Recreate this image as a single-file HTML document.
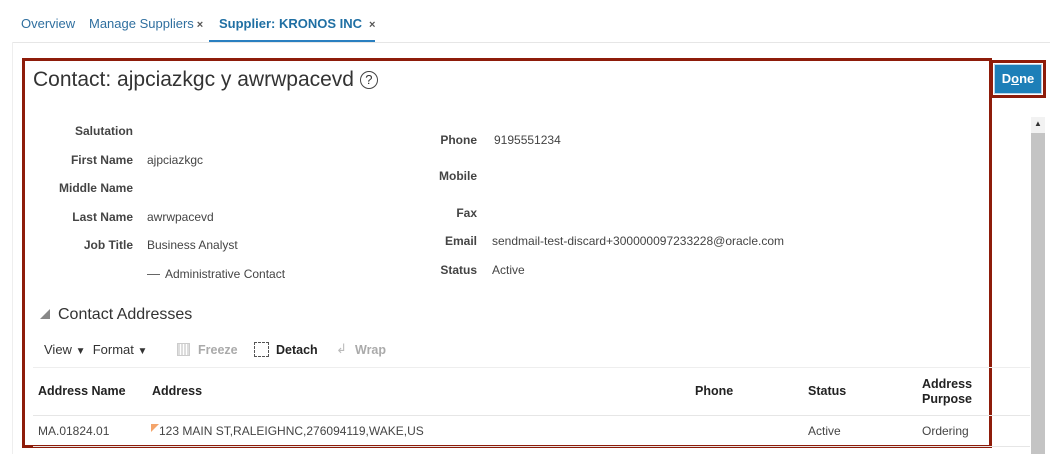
<!DOCTYPE html>
<html><head><meta charset="utf-8"><style>
*{margin:0;padding:0;box-sizing:border-box}
body{width:1050px;height:454px;background:#fff;font-family:"Liberation Sans",Arial,sans-serif;position:relative;overflow:hidden;color:#333}
.a{position:absolute;white-space:nowrap}
.tab{font-size:13px;color:#2f6f9f;top:16px}
.lbl{font-size:12px;font-weight:bold;color:#444;text-align:right;width:120px}
.val{font-size:12px;color:#444}
.th{font-size:12.5px;font-weight:bold;color:#222}
.td{font-size:12px;color:#444}
.x{color:#555;font-size:11px;font-weight:bold;margin-left:3px}
</style></head><body>
<div class="a tab" style="left:21px">Overview</div>
<div class="a tab" style="left:89px">Manage Suppliers<span class="x">×</span></div>
<div class="a tab" style="left:219px;font-weight:bold;color:#1f6fa3">Supplier: KRONOS INC<span class="x" style="margin-left:7px">×</span></div>
<div class="a" style="left:209px;top:40px;width:166px;height:3px;background:#2a7fc0"></div>
<div class="a" style="left:12px;top:42px;width:1038px;height:1px;background:#e6e6e6"></div>
<div class="a" style="left:12px;top:42px;width:1px;height:412px;background:#eee"></div>

<div class="a" style="left:22px;top:58px;width:970px;height:390px;border:3px solid #8e1c0a"></div>
<div class="a" style="left:33px;top:68px;font-size:21px;color:#333">Contact: ajpciazkgc y awrwpacevd <span style="display:inline-block;width:18px;height:18px;border:1.5px solid #444;border-radius:50%;font-size:13px;text-align:center;line-height:15px;vertical-align:2px">?</span></div>

<div class="a lbl" style="left:13px;top:124px">Salutation</div>
<div class="a lbl" style="left:13px;top:153px">First Name</div><div class="a val" style="left:147px;top:153px">ajpciazkgc</div>
<div class="a lbl" style="left:13px;top:181px">Middle Name</div>
<div class="a lbl" style="left:13px;top:210px">Last Name</div><div class="a val" style="left:147px;top:210px">awrwpacevd</div>
<div class="a lbl" style="left:13px;top:238px">Job Title</div><div class="a val" style="left:147px;top:238px">Business Analyst</div>
<div class="a val" style="left:147px;top:267px"><span style="display:inline-block;width:13px;height:1px;background:#666;vertical-align:3px;margin-right:5px"></span>Administrative Contact</div>

<div class="a lbl" style="left:357px;top:133px">Phone</div><div class="a val" style="left:494px;top:133px">9195551234</div>
<div class="a lbl" style="left:357px;top:169px">Mobile</div>
<div class="a lbl" style="left:357px;top:206px">Fax</div>
<div class="a lbl" style="left:357px;top:234px">Email</div><div class="a val" style="left:492px;top:234px">sendmail-test-discard+300000097233228@oracle.com</div>
<div class="a lbl" style="left:357px;top:263px">Status</div><div class="a val" style="left:492px;top:263px">Active</div>

<div class="a" style="left:40px;top:309px;width:0;height:0;border-bottom:10px solid #888;border-left:10px solid transparent"></div>
<div class="a" style="left:58px;top:306px;font-size:16px;color:#333">Contact Addresses</div>
<div class="a" style="left:44px;top:342px;font-size:13px;color:#333">View <span style="font-size:10px">▼</span>&nbsp; Format <span style="font-size:10px">▼</span></div>
<div class="a" style="left:177px;top:343px;width:13px;height:13px;border:1px solid #ccc;background:repeating-linear-gradient(90deg,#ddd 0 2px,#fff 2px 3px)"></div>
<div class="a" style="left:198px;top:343px;font-size:12.5px;font-weight:bold;color:#aaa">Freeze</div>
<div class="a" style="left:254px;top:342px;width:15px;height:15px;border:1px dashed #555"></div>
<div class="a" style="left:276px;top:343px;font-size:12.5px;font-weight:bold;color:#222">Detach</div>
<div class="a" style="left:336px;top:341px;font-size:13px;color:#bbb">↲</div>
<div class="a" style="left:355px;top:343px;font-size:12.5px;font-weight:bold;color:#aaa">Wrap</div>
<div class="a" style="left:33px;top:367px;width:997px;height:1px;background:#eee"></div>

<div class="a th" style="left:38px;top:384px">Address Name</div>
<div class="a th" style="left:152px;top:384px">Address</div>
<div class="a th" style="left:695px;top:384px">Phone</div>
<div class="a th" style="left:808px;top:384px">Status</div>
<div class="a th" style="left:922px;top:377px;line-height:15px">Address<br>Purpose</div>
<div class="a" style="left:33px;top:415px;width:997px;height:1px;background:#e6e6e6"></div>
<div class="a td" style="left:38px;top:424px">MA.01824.01</div>
<div class="a" style="left:151px;top:424px;width:0;height:0;border-top:8px solid #f4a46a;border-right:8px solid transparent"></div>
<div class="a td" style="left:159px;top:424px">123 MAIN ST,RALEIGHNC,276094119,WAKE,US</div>
<div class="a td" style="left:808px;top:424px">Active</div>
<div class="a td" style="left:922px;top:424px">Ordering</div>
<div class="a" style="left:33px;top:446px;width:997px;height:1px;background:#e6e6e6"></div>

<div class="a" style="left:990px;top:60px;width:56px;height:38px;border:3px solid #8e1c0a;background:#fff"></div>
<div class="a" style="left:994px;top:64px;width:48px;height:30px;background:#1d7fb8;border:1px solid #b8d4e8;color:#fff;font-size:13px;font-weight:bold;text-align:center;line-height:28px">D<u>o</u>ne</div>

<div class="a" style="left:1031px;top:117px;width:14px;height:337px;background:#f2f2f2"></div>
<div class="a" style="left:1034px;top:119px;font-size:8px;color:#333">▲</div>
<div class="a" style="left:1031px;top:133px;width:14px;height:321px;background:#c4c4c4"></div>
</body></html>
